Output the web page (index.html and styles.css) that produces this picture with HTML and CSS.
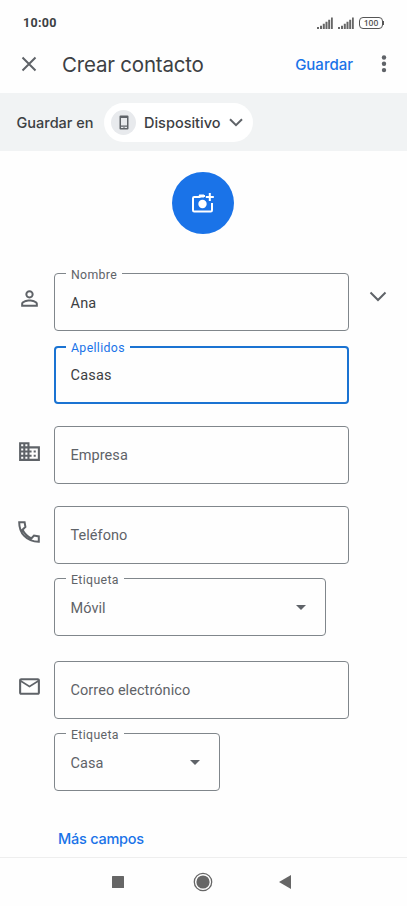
FILE: index.html
```html
<!DOCTYPE html>
<html lang="es">
<head>
<meta charset="utf-8">
<title>Crear contacto</title>
<link rel="stylesheet" href="styles.css">
</head>
<body>
<div class="status">
  <span class="time">10:00</span>
  <svg class="signal" width="16" height="12" viewBox="0 0 16 12"><path d="M0 12v-2h2v2zM3 12V8.800h2V12zM5.800 12V6.800h2V12zM8.500 12V4.800h2V12zM11.200 12V2.800h2V12zM14 12V.5h1.800V12z"/></svg>
  <svg class="signal" width="16" height="12" viewBox="0 0 16 12"><path d="M0 12v-2h2v2zM3 12V8.800h2V12zM5.800 12V6.800h2V12zM8.500 12V4.800h2V12zM11.200 12V2.800h2V12zM14 12V.5h1.800V12z"/></svg>
  <span class="battery">100</span><i class="battery-tip"></i>
</div>
<header class="bar">
  <svg class="close" width="16" height="16" viewBox="0 0 16 16"><path d="M1.500 1.500l13 13M14.500 1.500l-13 13"/></svg>
  <h1>Crear contacto</h1>
  <span class="save">Guardar</span>
  <svg class="more" width="6" height="18" viewBox="0 0 6 18"><circle cx="3" cy="2.500" r="2.200"/><circle cx="3" cy="8.800" r="2.200"/><circle cx="3" cy="15.100" r="2.200"/></svg>
</header>
<section class="account">
  <span class="account-label">Guardar en</span>
  <div class="pill">
    <span class="device"><svg width="10" height="15" viewBox="0 0 10 15"><path fill-rule="evenodd" d="M1.500.5h7q1 0 1 1v12q0 1-1 1h-7q-1 0-1-1v-12q0-1 1-1zM2 3v7.500h6V3zM2 11.800v1.300h2v-.6h2v.6h2v-1.300z"/></svg></span>
    <span class="pill-text">Dispositivo</span>
    <svg class="chev" width="14" height="9" viewBox="0 0 14 9"><path d="M1 1.200l6 6 6-6"/></svg>
  </div>
</section>
<main>
  <div class="photo">
    <svg width="24" height="24" viewBox="0 0 24 24"><path class="frame" d="M14 5H9.500L8.500 6H3.200Q2 6 2 7.200V19.300Q2 20.500 3.200 20.500H19.800Q21 20.500 21 19.300V12"/><path class="tab" d="M7 6.500l1.200-3H13v3z"/><circle cx="11.500" cy="13" r="4.200"/><path class="plus" d="M18.800 2v8M14.800 6h8"/></svg>
  </div>
  <div class="row name">
    <span class="icon"><svg width="25" height="25" viewBox="0 0 24 24"><path d="M12 5.900a2.100 2.100 0 1 1 0 4.200 2.100 2.100 0 0 1 0-4.200m0 9c2.970 0 6.100 1.460 6.100 2.100v1.100H5.900V17c0-.640 3.130-2.100 6.100-2.100M12 4C9.790 4 8 5.790 8 8s1.790 4 4 4 4-1.790 4-4-1.790-4-4-4zm0 9c-2.670 0-8 1.340-8 4v3h16v-3c0-2.660-5.330-4-8-4z"/></svg></span>
    <div class="field dark"><label>Nombre</label>Ana</div>
    <svg class="expand" width="18" height="11" viewBox="0 0 18 11"><path d="M1.500 1.500L9 9l7.500-7.500"/></svg>
  </div>
  <div class="row surname"><div class="field dark active"><label>Apellidos</label>Casas</div></div>
  <div class="row company">
    <span class="icon"><svg width="25" height="25" viewBox="0 0 24 24"><path d="M12 7V3H2v18h20V7H12zM6 19H4v-2h2v2zm0-4H4v-2h2v2zm0-4H4V9h2v2zm0-4H4V5h2v2zm4 12H8v-2h2v2zm0-4H8v-2h2v2zm0-4H8V9h2v2zm0-4H8V5h2v2zm10 12h-8v-2h2v-2h-2v-2h2v-2h-2V9h8v10zm-2-8h-2v2h2v-2zm0 4h-2v2h2v-2z"/></svg></span>
    <div class="field">Empresa</div>
  </div>
  <div class="row phone">
    <span class="icon"><svg class="handset" width="22" height="22" viewBox="0 0 22 22"><path d="M1.200 1.200H6.600L7.400 6L4.500 8.700Q7.500 14.500 13.300 17.500L16 14.600L20.800 15.400V20.800Q11.500 20.500 6.200 14.900Q1.200 9.500 1.200 1.200z"/></svg></span>
    <div class="field">Teléfono</div>
  </div>
  <div class="row phone-tag"><div class="field select"><label>Etiqueta</label>Móvil<i class="arrow"></i></div></div>
  <div class="row mail">
    <span class="icon"><svg width="25" height="25" viewBox="0 0 24 24"><path d="M22 6c0-1.100-.9-2-2-2H4c-1.100 0-2 .9-2 2v12c0 1.100.9 2 2 2h16c1.100 0 2-.9 2-2V6zm-2 0l-8 5-8-5h16zm0 12H4V8l8 5 8-5v10z"/></svg></span>
    <div class="field">Correo electrónico</div>
  </div>
  <div class="row mail-tag"><div class="field select small"><label>Etiqueta</label>Casa<i class="arrow"></i></div></div>
  <a class="more-fields">Más campos</a>
</main>
<nav>
  <svg width="12" height="12" viewBox="0 0 12 12"><rect width="12" height="12" rx=".5"/></svg>
  <svg width="20" height="20" viewBox="0 0 20 20"><circle class="ring" cx="10" cy="10" r="8.700"/><circle cx="10" cy="10" r="6.600"/></svg>
  <svg width="12" height="14" viewBox="0 0 12 14"><path d="M12 0v14L0 7z"/></svg>
</nav>
</body>
</html>
```
FILE: styles.css
```css
* { box-sizing: border-box; }
body {
  margin: 0;
  width: 407px;
  height: 906px;
  display: flex;
  flex-direction: column;
  background: #fefefe;
  color: #3c4043;
  font-family: Roboto, sans-serif;
  overflow: hidden;
}
svg { display: block; flex: none; fill: #5f6368; }
.status {
  height: 36px;
  padding: 9px 23px 0;
  display: flex;
  align-items: center;
}
.time { flex: 1; font-size: 12.500px; font-weight: 700; letter-spacing: .3px; line-height: 28px; }
.signal { fill: #666; margin-right: 5px; }
.battery {
  width: 24px;
  height: 12px;
  border: 1.500px solid #555;
  border-radius: 4px;
  font: 600 8.500px/10px "Open Sans", sans-serif;
  text-align: center;
  color: #555;
}
.battery-tip { width: 1px; height: 4px; background: #555; }
.bar {
  height: 57px;
  padding: 0 20px 0 21px;
  display: flex;
  align-items: center;
}
.close { fill: none; stroke: #5f6368; stroke-width: 2; margin-top: -1px; }
.more { margin-top: -1px; }
h1 {
  flex: 1;
  margin: 0 0 0 25px;
  font: 400 20.500px Inter, sans-serif;
  letter-spacing: -.2px;
}
.save {
  margin-right: 28px;
  font: 450 15px Inter, sans-serif;
  color: #1a73e8;
}
.account {
  height: 58px;
  padding-left: 16.500px;
  display: flex;
  align-items: center;
  background: #f1f3f4;
  font: 450 14.500px Inter, sans-serif;
}
.account-label { width: 87.500px; white-space: nowrap; }
.pill {
  width: 149px;
  height: 39px;
  padding: 0 10px 0 7px;
  display: flex;
  align-items: center;
  border-radius: 20px;
  background: #fff;
}
.device {
  width: 25px;
  height: 25px;
  border-radius: 50%;
  background: #e8eaed;
  display: grid;
  place-items: center;
}
.pill-text { margin-left: 8px; flex: 1; }
.chev, .expand { fill: none; stroke: #5f6368; stroke-width: 2; }
main { height: 706px; padding-top: 21px; }
.photo {
  width: 62px;
  height: 62px;
  margin: 0 0 0 172px;
  border-radius: 50%;
  background: #1a73e8;
  display: grid;
  place-items: center;
}
.photo svg { fill: #fff; }
.photo .frame, .photo .plus { fill: none; stroke: #fff; stroke-width: 2; }
.row { display: flex; padding-left: 54px; }
.icon {
  width: 30px;
  height: 51px;
  margin-left: -40px;
  margin-right: 10px;
  display: grid;
  place-items: center;
}
.handset { fill: none; stroke: #5f6368; stroke-width: 2; }
.field {
  position: relative;
  width: 295px;
  height: 58px;
  padding-left: 15.500px;
  border: 1px solid #80868b;
  border-radius: 4px;
  font-size: 14.500px;
  line-height: 58px;
  letter-spacing: .06px;
  color: #5f6368;
}
.field label {
  position: absolute;
  top: -7px;
  left: 11px;
  padding: 0 5px;
  background: #fefefe;
  font-size: 12.300px;
  line-height: 16px;
  letter-spacing: .35px;
}
.dark { color: #3c4043; letter-spacing: .2px; }
.name .field, .select { line-height: 60px; }
.dark label { color: #5f6368; }
.active { border: 2px solid #1a73d2; padding-left: 14.500px; line-height: 55px; }
.active label { color: #1a73e8; top: -8px; left: 10px; }
.select { width: 272px; }
.small { width: 166px; }
.arrow {
  position: absolute;
  right: 19px;
  top: 26px;
  border: 5.500px solid transparent;
  border-top-color: #5f6368;
  border-bottom: 0;
}
.expand { margin: 18px 0 0 20px; }
.name { margin-top: 39px; }
.surname { margin-top: 15px; }
.company { margin-top: 22px; }
.phone { margin-top: 22px; }
.phone-tag { margin-top: 14px; }
.mail { margin-top: 25px; }
.mail-tag { margin-top: 14px; }
.more-fields {
  display: block;
  margin: 37px 0 0 58px;
  font: 500 14.500px/22px Inter, sans-serif;
  letter-spacing: -.25px;
  color: #1a73e8;
}
nav {
  height: 49px;
  border-top: 1px solid #eee;
  padding-left: 112px;
  display: flex;
  align-items: center;
  gap: 69px;
}
nav svg { fill: #666; }
nav svg + svg + svg { margin-left: -3px; }
.ring { fill: none; stroke: #666; stroke-width: 1.300; }
```
